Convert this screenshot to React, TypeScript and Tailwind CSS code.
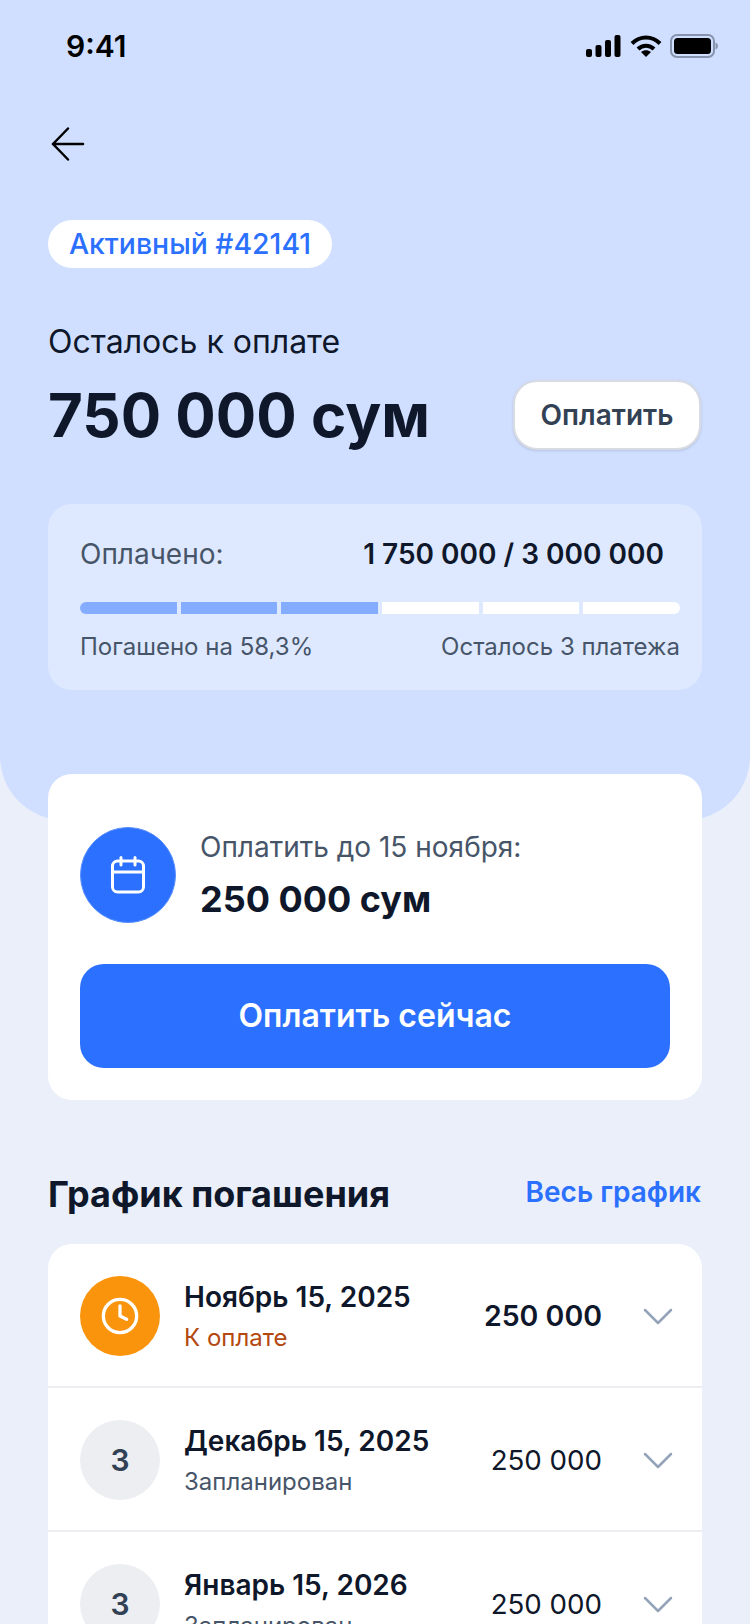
import { Clock } from "lucide-react";

const rows = [
  { date: "Ноябрь 15, 2025", status: "К оплате", active: true },
  { date: "Декабрь 15, 2025", status: "Запланирован", active: false },
  { date: "Январь 15, 2026", status: "Запланирован", active: false },
];

const segments = [true, true, true, false, false, false];

function StatusIcons() {
  return (
    <div className="-mr-[18px] flex items-center gap-[8px]">
      <svg width="36" height="22" viewBox="0 0 36 22" fill="#000">
        <rect x="0" y="14" width="6" height="8" rx="2" />
        <rect x="9.500" y="10" width="6" height="12" rx="2" />
        <rect x="19" y="5" width="6" height="17" rx="2" />
        <rect x="28.500" y="0" width="6" height="22" rx="2" />
      </svg>
      <svg width="32" height="24" viewBox="0 0 32 24" fill="none" stroke="#000" strokeWidth="4">
        <path d="M2 9.5C10 1.5 22 1.5 30 9.5" />
        <path d="M8 15C12.500 10.500 19.500 10.500 24 15" />
        <path d="M16 23L11 18C14 15.500 18 15.500 21 18Z" fill="#000" stroke="none" />
      </svg>
      <svg width="48" height="24" viewBox="0 0 48 24" fill="none">
        <rect x="1" y="1" width="43" height="22" rx="6" stroke="#8894ad" strokeWidth="2" />
        <rect x="4" y="4" width="37" height="16" rx="3.500" fill="#000" />
        <path d="M45.500 8.500C47 9 48 10.500 48 12C48 13.500 47 15 45.500 15.500Z" fill="#8894ad" />
      </svg>
    </div>
  );
}

function BackIcon() {
  return (
    <svg className="mt-[60px] ml-[2px]" width="36" height="36" viewBox="0 0 36 36" fill="none" stroke="#000" strokeWidth="2.500" strokeLinecap="round" strokeLinejoin="round">
      <path d="M33 18H3" />
      <path d="M18 2.500L3 18L18 33.500" />
    </svg>
  );
}

function CalendarIcon() {
  return (
    <svg width="34" height="38" viewBox="0 0 34 38" fill="none" stroke="#fff" strokeWidth="3" strokeLinecap="round">
      <rect x="1.500" y="5" width="31" height="31" rx="5" />
      <path d="M1.500 16H32.500" />
      <path d="M10 1.500V9" />
      <path d="M24 1.500V9" />
    </svg>
  );
}

function ChevronIcon() {
  return (
    <svg className="-mr-[3px] ml-[41px] shrink-0" width="30" height="17" viewBox="0 0 30 17" fill="none" stroke="#94a3b8" strokeWidth="2.500" strokeLinecap="round" strokeLinejoin="round">
      <path d="M2 2L15 15L28 2" />
    </svg>
  );
}

export default function App() {
  return (
    <div className="h-[1624px] w-[750px] overflow-hidden bg-[#eaeff9] font-['Inter',sans-serif] text-[#0f172a]">
      <header className="h-[820px] rounded-b-[64px] bg-[#d0dfff] px-[48px]">
        <div className="flex items-center justify-between pt-[26px] pr-[2px] pl-[18px]">
          <span className="text-[30px] leading-[40px] font-semibold text-black">9:41</span>
          <StatusIcons />
        </div>
        <BackIcon />
        <div className="mt-[58px] flex h-[48px] w-[284px] items-center justify-center rounded-full bg-white text-[28.4px] font-medium text-[#2b70ff]">
          Активный #42141
        </div>
        <p className="mt-[52px] text-[32px] leading-[44px]">Осталось к оплате</p>
        <div className="mt-[11px] flex items-center justify-between">
          <span className="text-[60px] leading-[80px] font-bold">750 000 сум</span>
          <button className="mr-[1px] h-[70px] w-[188px] rounded-[24px] border-2 border-[#d8dbe3] bg-white text-[28px] font-semibold text-[#334155] shadow-sm">
            Оплатить
          </button>
        </div>
        <div className="mt-[49px] h-[186px] rounded-[24px] bg-[#dee9ff] px-[32px] pt-[30px]">
          <div className="flex items-center justify-between pr-[6px]">
            <span className="text-[28px] leading-[40px] text-[#475569]">Оплачено:</span>
            <span className="text-[28px] leading-[40px] font-semibold">1 750 000 / 3 000 000</span>
          </div>
          <div className="mt-[28px] flex h-[12px] w-[600px] gap-[4px] overflow-hidden rounded-full">
            {segments.map((paid, i) => (
              <div key={i} className={paid ? "flex-1 bg-[#85adff]" : "flex-1 bg-white"} />
            ))}
          </div>
          <div className="mt-[17px] flex w-[600px] justify-between text-[24px] leading-[32px] text-[#475569]">
            <span>Погашено на 58,3%</span>
            <span>Осталось 3 платежа</span>
          </div>
        </div>
      </header>

      <main className="px-[48px]">
        <section className="-mt-[46px] h-[326px] rounded-[24px] bg-white px-[32px] pt-[53px]">
          <div className="flex items-center gap-[24px]">
            <div className="flex h-[96px] w-[96px] items-center justify-center rounded-full border border-[#5a8fff] bg-[#2b70ff]">
              <CalendarIcon />
            </div>
            <div>
              <p className="text-[28px] leading-[40px] text-[#475569]">Оплатить до 15 ноября:</p>
              <p className="mt-[8px] text-[36px] leading-[48px] font-bold">250 000 сум</p>
            </div>
          </div>
          <button className="mt-[41px] h-[104px] w-full rounded-[24px] bg-[#2b70ff] text-[32px] font-semibold text-white">
            Оплатить сейчас
          </button>
        </section>

        <div className="mt-[70px] flex items-center justify-between">
          <h2 className="text-[36px] leading-[48px] font-bold">График погашения</h2>
          <span className="mr-[1px] mb-[4px] text-[28px] leading-[40px] font-semibold text-[#2b70ff]">Весь график</span>
        </div>

        <section className="mt-[26px] rounded-[24px] bg-white">
          {rows.map((row) => (
            <div key={row.date} className="flex h-[144px] items-center border-b-2 border-[#eceef2] px-[32px] pt-[2px]">
              {row.active ? (
                <div className="flex h-[80px] w-[80px] shrink-0 items-center justify-center rounded-full bg-[#f9940c]">
                  <Clock className="h-[40px] w-[40px] text-white" strokeWidth={2} />
                </div>
              ) : (
                <div className="flex h-[80px] w-[80px] shrink-0 items-center justify-center rounded-full bg-[#eceef2] text-[30px] font-semibold text-[#334155]">
                  3
                </div>
              )}
              <div className="ml-[24px] flex-1">
                <p className="text-[28px] leading-[36px] font-semibold">{row.date}</p>
                <p className={row.active ? "mt-[7px] text-[24px] leading-[32px] text-[#b4480f]" : "mt-[7px] text-[24px] leading-[32px] text-[#475569]"}>
                  {row.status}
                </p>
              </div>
              <span className={row.active ? "text-[28.5px] leading-[36px] font-semibold" : "text-[27.7px] leading-[36px]"}>250 000</span>
              <ChevronIcon />
            </div>
          ))}
        </section>
      </main>
    </div>
  );
}
